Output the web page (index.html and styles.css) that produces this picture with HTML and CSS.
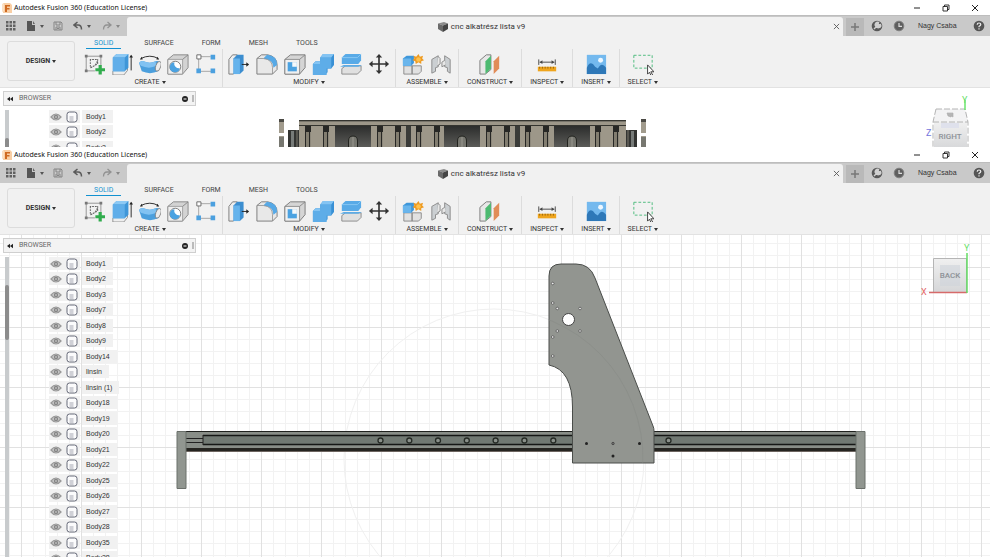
FILE: index.html
```html
<!DOCTYPE html>
<html lang="en">
<head>
<meta charset="utf-8">
<title>Autodesk Fusion 360 (Education License)</title>
<link rel="stylesheet" href="styles.css">
</head>
<body>
<svg class="defs" aria-hidden="true">
  <linearGradient id="dark" x1="0" y1="0" x2="0" y2="1"><stop offset="0" stop-color="#2c2d2c"/><stop offset="1" stop-color="#5b5b58"/></linearGradient>
  <linearGradient id="face" x1="0" y1="0" x2="0" y2="1"><stop offset="0" stop-color="#f0f0f0"/><stop offset="1" stop-color="#d5d6d8"/></linearGradient>
  <symbol id="logo" viewBox="0 0 10 10"><path d="M1 0h7l2 2v8H1z" fill="#f9cfa5"/><path d="M0 1l2-1v8l-2 1z" fill="#fbe0c4"/><path d="M3 2h5v1.500H5V5h2.500v1.400H5V9H3z" fill="#cf6a22"/></symbol>
  <symbol id="apps" viewBox="0 0 10 10"><path d="M0 0h2.500v2.500H0zM3.500 0H6v2.500H3.500zM7 0h2.500v2.500H7zM0 3.500h2.500V6H0zM3.500 3.500H6V6H3.500zM7 3.500h2.500V6H7zM0 7h2.500v2.500H0zM3.500 7H6v2.500H3.500zM7 7h2.500v2.500H7z" fill="#606060"/></symbol>
  <symbol id="file" viewBox="0 0 10 10"><path d="M1 0h5v4h3v6H1z" fill="#555"/><path d="M7 0l2 3H7z" fill="#666"/></symbol>
  <symbol id="save" viewBox="0 0 10 10"><path d="M1 1h7l1 1v7H1zM3 1v3h4V1M3 9V6h4v3M4 7.500h2" fill="none" stroke="#858585"/></symbol>
  <symbol id="undo" viewBox="0 0 10 10"><path d="M4.500 1L1 4l3.500 3M1.500 4H5q3.500 0 3.500 4.500" fill="none" stroke="#5a5a5a" stroke-width="1.500"/></symbol>
  <symbol id="redo" viewBox="0 0 10 10"><path d="M5.500 1L9 4 5.500 7M8.500 4H5q-3.500 0-3.500 4.500" fill="none" stroke="#929292" stroke-width="1.300"/></symbol>
  <symbol id="cube" viewBox="0 0 12 12"><path d="M1 2.500L7 1l4 1.500-5 2z" fill="#8b8b8b"/><path d="M1 2.500l5 2V11L1 8z" fill="#6a6a6a"/><path d="M6 4.500l5-2V8l-5 3z" fill="#444"/></symbol>
  <symbol id="tool" viewBox="0 0 12 12"><circle cx="6" cy="6" r="5.300" fill="#595959"/><path d="M3 9l3-3M5.500 6.500a2 2 0 0 1 2-4L7 4l1 1 1.500-.5a2 2 0 0 1-4 2" stroke="#d0d0d0" stroke-width="1.400" fill="#d0d0d0"/></symbol>
  <symbol id="clock" viewBox="0 0 12 12"><circle cx="6" cy="6" r="4.800" fill="#5f5f5f" stroke="#808080"/><path d="M6 3v3.300h3" stroke="#ddd" stroke-width="1.200" fill="none"/></symbol>
  <symbol id="help" viewBox="0 0 12 12"><circle cx="6" cy="6" r="5.300" fill="#555"/><path d="M4.200 4.800Q4.200 3 6 3t1.800 1.600Q7.800 5.500 6 6.500V7.300M6 8.300v1.300" stroke="#eee" stroke-width="1.200" fill="none"/></symbol>
  <symbol id="win" viewBox="0 0 8 8"><path d="M1 2.500h4.500V7H1zM2.500 2.500V1H7v4.500H5.500" fill="none" stroke="#222" stroke-width=".9"/></symbol>
  <symbol id="sketch" viewBox="0 0 24 24"><path d="M4 3.500h15M4 19.500h9M3.500 4v15M19.500 4v9" stroke="#777" fill="none" stroke-width=".8"/><path d="M2 2h3v3H2zM18 2h3v3h-3zM2 18h3v3H2z" fill="#777"/><path d="M8 7v9l8-4V7zM8 16Q15 14 16 7" fill="none" stroke="#666" stroke-width="1.100" stroke-dasharray="2 1"/><path d="M17 13h3.500v3.500H24V20h-3.500v3.500H17V20h-3.500v-3.500H17z" fill="#31ac4d"/></symbol>
  <symbol id="extrude" viewBox="0 0 24 24"><path d="M2 20l4-5h12v4l-4 5H2z" fill="#eee" stroke="#777" stroke-width=".8"/><path d="M2 5l4-4h13v15l-4 4H2z" fill="#3f96d8"/><path d="M2 5l4-4h13l-4 4z" fill="#8dc9f4"/><path d="M2 5h13v15H2z" fill="#60aee9"/><path d="M22 3v16" stroke="#222"/><path d="M20 5l2-3 2 3z" fill="#222"/></symbol>
  <symbol id="revolve" viewBox="0 0 24 24"><path d="M2 6q10-5 19 0" fill="none" stroke="#222"/><path d="M1 7l2-3 1 3zM22 7l-2-3-1 3z" fill="#222"/><path d="M0 11q2-3 5-2 7 3 13 0 4-1 6 2l-3 9q-9 4-18 0z" fill="#4b9fdd"/><path d="M0 11q2-3 5-2 7 3 13 0l1 5q-8 4-17 0z" fill="#81c2f2"/><ellipse cx="21" cy="14.500" rx="2.700" ry="5.500" transform="rotate(18 21 14.500)" fill="#ececec" stroke="#777" stroke-width=".8"/></symbol>
  <symbol id="hole" viewBox="0 0 24 24"><path d="M1 7l6-5h16v14l-6 7H1z" fill="#d3d3d3" stroke="#858585"/><path d="M1 7h16v16H1z" fill="#eee" stroke="#858585" stroke-width=".7"/><path d="M17 7l6-5" stroke="#858585"/><circle cx="9" cy="15" r="6" fill="#fff" stroke="#777"/><path d="M8 10a5.300 5.300 0 0 0 6 6.500A5.500 5.500 0 1 1 8 10z" fill="#4ba2e1"/></symbol>
  <symbol id="pattern" viewBox="0 0 24 24"><path d="M4 4v16h16M4 4h13" fill="none" stroke="#999" stroke-width=".9"/><path d="M2 2h4.500v4.500H2z" fill="#fff" stroke="#666"/><path d="M17 2h5v5h-5zM1.500 17h5v5h-5zM17 17h5v5h-5z" fill="#4ba0df"/></symbol>
  <symbol id="press" viewBox="0 0 24 24"><path d="M1 7l4-5h5v17l-4 4H1z" fill="#eee" stroke="#777"/><path d="M6 6l4-4h7v17l-4 4H6z" fill="#3c8ed0"/><path d="M6 6h7v17H6z" fill="#65b3ec"/><path d="M15 12.500h6" stroke="#222"/><path d="M20 10l3 2.500-3 2.500z" fill="#222"/></symbol>
  <symbol id="fillet" viewBox="0 0 24 24"><path d="M1 6l5-4h7q10 2 10 11v5l-5 5H1z" fill="#e8e8e8" stroke="#777"/><path d="M8 6l4-4q11 1 11 11l-4 3q0-9-11-10z" fill="#57a9e6"/><path d="M1 6h7q10 1 10 10v7" fill="none" stroke="#888" stroke-width=".8"/></symbol>
  <symbol id="shell" viewBox="0 0 24 24"><path d="M1 7l6-5h16v14l-6 7H1z" fill="#d5d5d5" stroke="#777"/><path d="M1 7h16v16H1z" fill="#f0f0f0" stroke="#777" stroke-width=".8"/><path d="M4 10h10v10H4z" fill="#4ba2e1"/><path d="M9 10h5v5H9z" fill="#f5f8fa"/><path d="M17 7l6-5" stroke="#888"/></symbol>
  <symbol id="combine" viewBox="0 0 24 24"><path d="M9 5l3-4h12v12l-3 4h-4v4l-3 3H1V12l3-3h5z" fill="#3990d5"/><path d="M9 5h12v12h-5v7H1V12h8z" fill="#5eade8"/><path d="M9 5l3-4h12l-3 4zM1 12l3-3h5v3z" fill="#84c4f3"/></symbol>
  <symbol id="split" viewBox="0 0 24 24"><path d="M2 17l4-3h17v5l-4 4H2z" fill="#e0e0e0" stroke="#888"/><path d="M2 5l4-4h17v7l-3 4H2z" fill="#58aae7"/><path d="M0 15l4-2h20l-4 2z" fill="#5dabe5"/><path d="M2 5h17l4-4" fill="none" stroke="#89c8f4"/></symbol>
  <symbol id="move" viewBox="0 0 24 24"><path d="M12 3v18M3 12h18" stroke="#333" stroke-width="1.800"/><path d="M8.500 5L12 1l3.500 4zM8.500 19l3.500 4 3.500-4zM5 8.500L1 12l4 3.500zM19 8.500l4 3.500-4 3.500z" fill="#333"/></symbol>
  <symbol id="component" viewBox="0 0 24 24"><path d="M2 14h9v9H2zM11 14h10v6l-3 3h-7z" fill="#e1e1e1" stroke="#888"/><path d="M1 6l4-3h8v8l-3 3H1z" fill="#3f97da"/><path d="M1 6h9v8H1z" fill="#69b5ec"/><path d="M18 1l1.500 3L23 3l-1 3 2 2-3 1v3l-3-2-3 2-.5-3-3-1 2-2-1-3 3 1z" fill="#ee9b22"/><circle cx="18" cy="7" r="2.500" fill="#ffc24d"/></symbol>
  <symbol id="joint" viewBox="0 0 24 24"><path d="M2 7l7-4v12l-3 1v4l-4 2zM22 7l-6-4v12l3 1v4l3 2z" fill="#cbcfd2" stroke="#888"/><path d="M9 4l2 2v6l-3 2M16 8l-3 2v5l4-2" fill="#e7e7e7" stroke="#888"/></symbol>
  <symbol id="plane" viewBox="0 0 24 24"><path d="M1 8l7-6h5v16l-6 5H1z" fill="#e7e7e7" stroke="#777"/><path d="M7 9l6-6v14l-6 6z" fill="#4cba70"/><path d="M16 9l6-6v14l-6 6z" fill="#e18c58"/></symbol>
  <symbol id="measure" viewBox="0 0 24 24"><path d="M3 7v6M21 7v6M4 10h16" stroke="#444" fill="none"/><path d="M4 10l3-2v4zM20 10l-3-2v4z" fill="#444"/><path d="M2 15h20v5H2z" fill="#efa51d"/><path d="M4 15v2M7 15v2M10 15v2M13 15v2M16 15v2M19 15v2" stroke="#94610b"/></symbol>
  <symbol id="image" viewBox="0 0 24 24"><path d="M2 2h21v21H2z" fill="#74b9ee"/><path d="M2 16q4-9 9-1l3 2q4-8 9-1v7H2z" fill="#2e78b8"/><circle cx="17" cy="8" r="2.700" fill="#edf7ff"/></symbol>
  <symbol id="select" viewBox="0 0 24 24"><path d="M2 2.500h20v14H2z" fill="none" stroke="#46b978" stroke-dasharray="3 2"/><path d="M17 13v10l2-2 2 4 1.500-1-2-3.500H24z" fill="#fff" stroke="#333"/></symbol>
  <symbol id="eye" viewBox="0 0 12 10"><path d="M1 5q5-6 10 0-5 6-10 0z" fill="#c8c8c8" stroke="#999" stroke-width="1.200"/><circle cx="6" cy="5" r="2.200" fill="#858585"/><circle cx="6" cy="5" r=".8" fill="#ddd"/></symbol>
  <symbol id="body" viewBox="0 0 12 12"><rect x="1" y="1" width="10" height="10" rx="2.500" fill="#fbfbfc" stroke="#666a78"/><path d="M3.500 5h4v5h-4z" fill="#d0d1d7"/></symbol>
  <symbol id="slot" viewBox="0 0 6 21"><path d="M0 0h6v6H0zM0 6h1v15H0zM4 6h1v15H4z" fill="#272725"/><path d="M1 6h3v15H1z" fill="#827d70"/><path d="M5 6h1v15H5z" fill="#8d887b"/></symbol>
  <symbol id="pocket" viewBox="0 0 36 21"><path d="M0 0h36v21H0z" fill="url(#dark)"/><path d="M13.500 21v-6q0-5 4.500-5t4.500 5v6" fill="#777770" stroke="#22231f"/><path d="M18 11v10" stroke="#9a988f"/></symbol>
</svg>

<section class="window upper">
  <header class="titlebar"><svg class="i10"><use href="#logo"/></svg><h1>Autodesk Fusion 360 (Education License)</h1>
    <button class="sys" aria-label="Minimize"><svg viewBox="0 0 8 8"><path d="M1 4h6" stroke="#222"/></svg></button><button class="sys" aria-label="Restore"><svg><use href="#win"/></svg></button><button class="sys" aria-label="Close"><svg viewBox="0 0 8 8"><path d="M1 1l6 6M7 1L1 7" stroke="#222"/></svg></button></header>
  <div class="tabbar">
    <div class="quick"><button aria-label="Data panel"><svg class="i10"><use href="#apps"/></svg></button><button class="drop" aria-label="File"><svg class="i10"><use href="#file"/></svg></button><button aria-label="Save"><svg class="i10"><use href="#save"/></svg></button><button class="drop" aria-label="Undo"><svg class="i10"><use href="#undo"/></svg></button><button class="drop pale" aria-label="Redo"><svg class="i10"><use href="#redo"/></svg></button></div>
    <div class="doc"><svg class="i12"><use href="#cube"/></svg><span>cnc alkatrész lista v9</span><button class="close" aria-label="Close tab"><svg viewBox="0 0 8 8"><path d="M1 1l6 6M7 1L1 7" stroke="#555"/></svg></button></div>
    <div class="account"><button class="add" aria-label="New tab"><svg class="i10" viewBox="0 0 10 10"><path d="M5 1v8M1 5h8" stroke="#777" stroke-width="1.500"/></svg></button><button aria-label="Extensions"><svg class="i12"><use href="#tool"/></svg></button><button aria-label="Job status"><svg class="i12"><use href="#clock"/></svg></button><button class="user">Nagy Csaba</button><button aria-label="Help"><svg class="i12"><use href="#help"/></svg></button></div>
  </div>
  <div class="ribbon">
    <button class="design drop">DESIGN</button>
    <div class="tools">
      <nav><a href="#" class="on">SOLID</a><a href="#">SURFACE</a><a href="#">FORM</a><a href="#">MESH</a><a href="#">TOOLS</a></nav>
      <div class="groups">
        <div class="group"><div class="icons"><svg><use href="#sketch"/></svg><svg><use href="#extrude"/></svg><svg><use href="#revolve"/></svg><svg><use href="#hole"/></svg><svg><use href="#pattern"/></svg></div><button class="drop">CREATE</button></div>
        <div class="group"><div class="icons"><svg><use href="#press"/></svg><svg><use href="#fillet"/></svg><svg><use href="#shell"/></svg><svg><use href="#combine"/></svg><svg><use href="#split"/></svg><svg><use href="#move"/></svg></div><button class="drop">MODIFY</button></div>
        <div class="group pair"><div class="icons"><svg><use href="#component"/></svg><svg><use href="#joint"/></svg></div><button class="drop">ASSEMBLE</button></div>
        <div class="group single"><div class="icons"><svg><use href="#plane"/></svg></div><button class="drop">CONSTRUCT</button></div>
        <div class="group single"><div class="icons"><svg><use href="#measure"/></svg></div><button class="drop">INSPECT</button></div>
        <div class="group single"><div class="icons"><svg><use href="#image"/></svg></div><button class="drop">INSERT</button></div>
        <div class="group single"><div class="icons"><svg><use href="#select"/></svg></div><button class="drop">SELECT</button></div>
      </div>
    </div>
  </div>
  <main class="canvas">
    <svg class="scene" viewBox="0 0 990 59" preserveAspectRatio="xMidYMin slice" role="img" aria-label="Gantry, side view">
      <path d="M279 31h5v28h-5zM641 31h5v28h-5z" fill="#a19b8d"/><path d="M279 31h5v3h-5zM641 31h5v3h-5z" fill="#4b4a45"/><path d="M279 49h5v10h-5zM641 49h5v10h-5z" fill="#777770"/><path d="M278 45h7v3h-7zM640 45h7v3h-7z" fill="#fff"/>
      <path d="M288 42h11v17h-11zM626 42h11v17h-11z" fill="#333432"/><path d="M291 43h3v16h-3zM631 43h3v16h-3z" fill="#777b79"/><path d="M297 42v17M628 42v17" stroke="#7c786e"/>
      <path d="M299 32h327v27H299z" fill="#9d9789"/><path d="M299 32.500h327M299 37.500h327" stroke="#34342f"/><path d="M299 33h327v1H299z" fill="#77746a"/>
      <g><use href="#slot" x="305" y="38" width="6" height="21"/><use href="#slot" x="323" y="38" width="6" height="21"/><use href="#slot" x="377" y="38" width="6" height="21"/><use href="#slot" x="395" y="38" width="6" height="21"/><use href="#slot" x="416" y="38" width="6" height="21"/><use href="#slot" x="434" y="38" width="6" height="21"/><use href="#slot" x="486" y="38" width="6" height="21"/><use href="#slot" x="504" y="38" width="6" height="21"/><use href="#slot" x="525" y="38" width="6" height="21"/><use href="#slot" x="543" y="38" width="6" height="21"/><use href="#slot" x="595" y="38" width="6" height="21"/><use href="#slot" x="613" y="38" width="6" height="21"/></g>
      <use href="#pocket" x="335" y="38" width="36" height="21"/><use href="#pocket" x="444" y="38" width="36" height="21"/><use href="#pocket" x="554" y="38" width="36" height="21"/>
      <path d="M406 38h5v21h-5zM515 38h5v21h-5z" fill="#3a3b38"/>
    </svg>
    <svg class="viewcube" viewBox="0 0 70 62" role="img" aria-label="View cube: right">
      <path d="M16 21h29l3 13H13z" fill="#f3f3f4"/><path d="M14 34h33v28H14z" fill="url(#face)"/><path d="M21 35h18v5H21z" fill="#dfe1ec"/><path d="M16 21h29l3 13v28M16 21l-3 13v28M13 34h35" fill="none" stroke="#b4b4b4" stroke-dasharray="6 2"/>
      <path d="M27 25h6v4l-2-1v1l-3-1zM28 27h5" fill="#bbb" stroke="#aaa" stroke-width=".6"/>
      <path d="M45 12v10" stroke="#6be46b" stroke-width="1.500"/><text x="42" y="15" class="axis y">Y</text><text x="6" y="48" class="axis z">Z</text><text x="30" y="51" class="label">RIGHT</text>
    </svg>
    <aside class="browser"><div class="panel"><button aria-label="Collapse"><svg viewBox="0 0 8 6"><path d="M4 0v6L0 3zM8 0v6L4 3z" fill="#222"/></svg></button><h2>BROWSER</h2><button aria-label="Options"><svg viewBox="0 0 6 6"><circle cx="3" cy="3" r="3" fill="#222"/><path d="M1.500 3h3" stroke="#fff"/></svg></button><i></i></div>
      <div class="tree"><div class="scroll"><b></b></div><ul>
        <li><span><svg><use href="#eye"/></svg><svg><use href="#body"/></svg></span><em>Body1</em></li>
        <li><span><svg><use href="#eye"/></svg><svg><use href="#body"/></svg></span><em>Body2</em></li>
        <li><span><svg><use href="#eye"/></svg><svg><use href="#body"/></svg></span><em>Body3</em></li>
      </ul></div></aside>
  </main>
</section>

<section class="window lower">
  <header class="titlebar"><svg class="i10"><use href="#logo"/></svg><h1>Autodesk Fusion 360 (Education License)</h1>
    <button class="sys" aria-label="Minimize"><svg viewBox="0 0 8 8"><path d="M1 4h6" stroke="#222"/></svg></button><button class="sys" aria-label="Restore"><svg><use href="#win"/></svg></button><button class="sys" aria-label="Close"><svg viewBox="0 0 8 8"><path d="M1 1l6 6M7 1L1 7" stroke="#222"/></svg></button></header>
  <div class="tabbar">
    <div class="quick"><button aria-label="Data panel"><svg class="i10"><use href="#apps"/></svg></button><button class="drop" aria-label="File"><svg class="i10"><use href="#file"/></svg></button><button aria-label="Save"><svg class="i10"><use href="#save"/></svg></button><button class="drop" aria-label="Undo"><svg class="i10"><use href="#undo"/></svg></button><button class="drop pale" aria-label="Redo"><svg class="i10"><use href="#redo"/></svg></button></div>
    <div class="doc"><svg class="i12"><use href="#cube"/></svg><span>cnc alkatrész lista v9</span><button class="close" aria-label="Close tab"><svg viewBox="0 0 8 8"><path d="M1 1l6 6M7 1L1 7" stroke="#555"/></svg></button></div>
    <div class="account"><button class="add" aria-label="New tab"><svg class="i10" viewBox="0 0 10 10"><path d="M5 1v8M1 5h8" stroke="#777" stroke-width="1.500"/></svg></button><button aria-label="Extensions"><svg class="i12"><use href="#tool"/></svg></button><button aria-label="Job status"><svg class="i12"><use href="#clock"/></svg></button><button class="user">Nagy Csaba</button><button aria-label="Help"><svg class="i12"><use href="#help"/></svg></button></div>
  </div>
  <div class="ribbon">
    <button class="design drop">DESIGN</button>
    <div class="tools">
      <nav><a href="#" class="on">SOLID</a><a href="#">SURFACE</a><a href="#">FORM</a><a href="#">MESH</a><a href="#">TOOLS</a></nav>
      <div class="groups">
        <div class="group"><div class="icons"><svg><use href="#sketch"/></svg><svg><use href="#extrude"/></svg><svg><use href="#revolve"/></svg><svg><use href="#hole"/></svg><svg><use href="#pattern"/></svg></div><button class="drop">CREATE</button></div>
        <div class="group"><div class="icons"><svg><use href="#press"/></svg><svg><use href="#fillet"/></svg><svg><use href="#shell"/></svg><svg><use href="#combine"/></svg><svg><use href="#split"/></svg><svg><use href="#move"/></svg></div><button class="drop">MODIFY</button></div>
        <div class="group pair"><div class="icons"><svg><use href="#component"/></svg><svg><use href="#joint"/></svg></div><button class="drop">ASSEMBLE</button></div>
        <div class="group single"><div class="icons"><svg><use href="#plane"/></svg></div><button class="drop">CONSTRUCT</button></div>
        <div class="group single"><div class="icons"><svg><use href="#measure"/></svg></div><button class="drop">INSPECT</button></div>
        <div class="group single"><div class="icons"><svg><use href="#image"/></svg></div><button class="drop">INSERT</button></div>
        <div class="group single"><div class="icons"><svg><use href="#select"/></svg></div><button class="drop">SELECT</button></div>
      </div>
    </div>
  </div>
  <main class="canvas">
    <svg class="scene" viewBox="0 0 990 322" preserveAspectRatio="xMidYMin slice" role="img" aria-label="Gantry, back view">
      <defs><pattern id="grid" x="21" y="32" width="60" height="60" patternUnits="userSpaceOnUse"><path d="M12.500 0v60M24.500 0v60M36.500 0v60M48.500 0v60M0 12.500h60M0 24.500h60M0 36.500h60M0 48.500h60" stroke="#f2f2f2"/><path d="M.5 0v60M0 .5h60" stroke="#e1e1e1"/></pattern></defs>
      <rect width="990" height="322" fill="url(#grid)"/>
      <circle cx="494" cy="224" r="150" fill="none" stroke="#f0f0f0"/>
      <path d="M186 196h670v21H186z" fill="#898e88"/><path d="M186 196.500h670" stroke="#20221f"/><path d="M186 213h670v3H186z" fill="#252420"/><path d="M186 216h670v1H186z" fill="#6d6560"/>
      <path d="M186 203.500h17M186 207.500h17" stroke="#222"/><path d="M203 200h653v10H203z" fill="#717973"/><path d="M203 200.500h653M203 209.500h653" stroke="#151715" stroke-width="1.500"/><path d="M203 200v10" stroke="#222"/>
      <path d="M177 196.500h9v57h-9zM856 196.500h9v57h-9z" fill="#919690" stroke="#6b706b"/>
      <g fill="#8a908a" stroke="#252a25" stroke-width="1.300"><circle cx="380.500" cy="205.500" r="2.500"/><circle cx="409.300" cy="205.500" r="2.500"/><circle cx="438" cy="205.500" r="2.500"/><circle cx="466.800" cy="205.500" r="2.500"/><circle cx="495.600" cy="205.500" r="2.500"/><circle cx="524.400" cy="205.500" r="2.500"/><circle cx="553.300" cy="205.500" r="2.500"/><circle cx="668.500" cy="205.500" r="2.500"/></g>
      <path d="M549 130V41q0-12 12-12h15q14 0 19 14l58 148q1 2 1 5v32h-81.500v-56q0-37-23.500-42z" fill="#929590" stroke="#4a4d4a"/>
      <path d="M494 74a150 150 0 0 1 149 154" fill="none" stroke="#888b86" stroke-width=".6" clip-path="inset(0 0 0 55px)"/>
      <circle cx="568.500" cy="84.500" r="6" fill="#fff" stroke="#444"/>
      <g fill="#eee" stroke="#555" stroke-width=".8"><circle cx="552.700" cy="48.500" r="1.300"/><circle cx="552.700" cy="68" r="1.300"/><circle cx="557.300" cy="73.500" r="1.300"/><circle cx="580" cy="73.500" r="1.300"/><circle cx="557.300" cy="96" r="1.300"/><circle cx="580" cy="96" r="1.300"/><circle cx="552.700" cy="102" r="1.300"/><circle cx="552.700" cy="121" r="1.300"/></g>
      <g fill="#222"><circle cx="586.500" cy="208.500" r="1.500"/><circle cx="639.500" cy="208.500" r="1.500"/><circle cx="613" cy="221" r="1.500"/></g><circle cx="613" cy="208.500" r="1.200" fill="#777" stroke="#333" stroke-width=".7"/>
    </svg>
    <svg class="viewcube" viewBox="0 0 70 62" role="img" aria-label="View cube: back">
      <path d="M13.500 23.500h33v34h-33z" fill="url(#face)" stroke="#b5b5b5"/><path d="M20 30h20v21H20z" fill="#cfd3da" opacity=".6"/>
      <path d="M9 57.500h38" stroke="#d66a6a" stroke-width="1.500"/><path d="M47 18v40" stroke="#63dc63" stroke-width="1.500"/><text x="44" y="16" class="axis y">Y</text><text x="1" y="60" class="axis x">X</text><text x="30" y="43" class="label">BACK</text>
    </svg>
    <aside class="browser"><div class="panel"><button aria-label="Collapse"><svg viewBox="0 0 8 6"><path d="M4 0v6L0 3zM8 0v6L4 3z" fill="#222"/></svg></button><h2>BROWSER</h2><button aria-label="Options"><svg viewBox="0 0 6 6"><circle cx="3" cy="3" r="3" fill="#222"/><path d="M1.500 3h3" stroke="#fff"/></svg></button><i></i></div>
      <div class="tree"><div class="scroll"><b></b></div><ul>
        <li><span><svg><use href="#eye"/></svg><svg><use href="#body"/></svg></span><em>Body1</em></li>
        <li><span><svg><use href="#eye"/></svg><svg><use href="#body"/></svg></span><em>Body2</em></li>
        <li><span><svg><use href="#eye"/></svg><svg><use href="#body"/></svg></span><em>Body3</em></li>
        <li><span><svg><use href="#eye"/></svg><svg><use href="#body"/></svg></span><em>Body7</em></li>
        <li><span><svg><use href="#eye"/></svg><svg><use href="#body"/></svg></span><em>Body8</em></li>
        <li><span><svg><use href="#eye"/></svg><svg><use href="#body"/></svg></span><em>Body9</em></li>
        <li><span><svg><use href="#eye"/></svg><svg><use href="#body"/></svg></span><em>Body14</em></li>
        <li><span><svg><use href="#eye"/></svg><svg><use href="#body"/></svg></span><em>linsin</em></li>
        <li><span><svg><use href="#eye"/></svg><svg><use href="#body"/></svg></span><em>linsin (1)</em></li>
        <li><span><svg><use href="#eye"/></svg><svg><use href="#body"/></svg></span><em>Body18</em></li>
        <li><span><svg><use href="#eye"/></svg><svg><use href="#body"/></svg></span><em>Body19</em></li>
        <li><span><svg><use href="#eye"/></svg><svg><use href="#body"/></svg></span><em>Body20</em></li>
        <li><span><svg><use href="#eye"/></svg><svg><use href="#body"/></svg></span><em>Body21</em></li>
        <li><span><svg><use href="#eye"/></svg><svg><use href="#body"/></svg></span><em>Body22</em></li>
        <li><span><svg><use href="#eye"/></svg><svg><use href="#body"/></svg></span><em>Body25</em></li>
        <li><span><svg><use href="#eye"/></svg><svg><use href="#body"/></svg></span><em>Body26</em></li>
        <li><span><svg><use href="#eye"/></svg><svg><use href="#body"/></svg></span><em>Body27</em></li>
        <li><span><svg><use href="#eye"/></svg><svg><use href="#body"/></svg></span><em>Body28</em></li>
        <li><span><svg><use href="#eye"/></svg><svg><use href="#body"/></svg></span><em>Body35</em></li>
        <li><span><svg><use href="#eye"/></svg><svg><use href="#body"/></svg></span><em>Body38</em></li>
      </ul></div></aside>
  </main>
</section>
</body>
</html>
```
FILE: styles.css
```css
* { box-sizing: border-box; }
body { margin: 0; height: 100vh; display: flex; flex-direction: column; overflow: hidden; background: #fff; color: #333; font: 7px/10px "Liberation Sans", Arial, sans-serif; }
button { border: 0; padding: 0; margin: 0; background: none; color: inherit; font: inherit; display: flex; align-items: center; justify-content: center; }
h1, h2 { margin: 0; font-weight: 400; }
svg { display: block; flex: none; }
.defs { position: absolute; width: 0; height: 0; }
.i10 { width: 10px; height: 10px; }
.i12 { width: 12px; height: 12px; }
.drop::after { content: ""; border: 2px solid transparent; border-top: 3px solid currentColor; border-bottom: 0; margin-left: 2px; }

.window { display: flex; flex-direction: column; min-height: 0; overflow: hidden; }
.upper { flex: none; }
.lower { flex: 1; }
.titlebar { height: 15px; flex: none; display: flex; align-items: center; padding: 0 2px; gap: 2px; }
.titlebar h1 { flex: 1; color: #111; font: 7px/14px "Noto Sans", sans-serif; }
.sys { width: 27px; height: 15px; }
.sys svg { width: 8px; height: 8px; }

.tabbar { height: 21px; flex: none; display: flex; align-items: stretch; background: #c9c9c9; border-top: 1px solid #bdbdbd; color: #444; }
.quick { width: 127px; display: flex; align-items: center; gap: 8px; padding-left: 6px; color: #555; }
.quick .pale { color: #888; }
.quick .drop { width: 21px; }
.quick .drop::after { margin-left: 4px; }
.doc { flex: 1; display: flex; align-items: center; justify-content: center; gap: 2px; margin-top: 1px; background: #f1f1f1; border-radius: 3px 3px 0 0; font: 8px/12px Roboto, sans-serif; color: #333; padding-left: 8px; }
.doc svg.i12 { margin-left: auto; }
.doc .close { margin-left: auto; width: 14px; height: 14px; }
.close svg { width: 7px; height: 7px; }
.account { width: 147px; display: flex; align-items: center; padding: 0 5px 0 3px; }
.account .add { width: 18px; height: 18px; margin: 1px 7px 0 0; background: #b9b9b9; }
.account .i12 { margin-right: 10px; }
.account .add .i10 { margin: 0; }
.account .user { margin: 0 auto 0 3px; color: #333; }
.account button:last-child .i12 { margin-right: 0; }

.ribbon { height: 52px; flex: none; display: flex; background: #f1f1f1; border-bottom: 1px solid #e2e2e2; font: 7px/9px Roboto, sans-serif; }
.design { width: 68px; height: 40px; margin: 5px 3px 0 7px; border: 1px solid #dcdcdc; border-radius: 3px; font-weight: 700; }
.tools { flex: 1; }
nav { display: flex; gap: 18px; padding-left: 8px; height: 13px; }
nav a { color: #444; text-decoration: none; padding: 3px 5px 0; height: 13px; }
nav .on { color: #1291d0; border-bottom: 1px solid #1291d0; padding: 3px 8px 0; }
.groups { display: flex; }
.group { display: flex; flex-direction: column; align-items: center; padding: 0 2px; border-right: 1px solid #dcdcdc; height: 38px; }
.group:last-child { border: 0; }
.group.pair { padding: 0 3px; }
.group.single { padding: 0 8px; }
.icons { display: flex; height: 29px; align-items: center; }
.icons svg { width: 22px; height: 22px; margin: 0 3px; }

.canvas { position: relative; flex: 1; overflow: hidden; background: #fff; }
.upper .canvas { flex: none; height: 59px; }
.scene { position: absolute; inset: 0; width: 100%; height: 100%; }
.viewcube { position: absolute; top: 0; right: 0; width: 70px; height: 62px; }
.axis { font: 9px Roboto, sans-serif; }
.x { fill: #e56464; }
.y { fill: #69df69; }
.z { fill: #7474dd; }
.label { font: 500 8px Roboto, sans-serif; fill: #8e9297; text-anchor: middle; }

.browser { position: relative; display: flex; flex-direction: column; height: 100%; width: 196px; padding: 3px 0 0 3px; }
.panel { height: 15px; flex: none; display: flex; align-items: center; padding: 0 1px 0 3px; background: #f3f3f3; border: 1px solid #cfcfcf; }
.panel h2 { flex: 1; margin-left: 6px; color: #666; font: 7px/13px Roboto, sans-serif; }
.panel svg { width: 6px; height: 6px; }
.panel i { width: 2px; height: 7px; margin-left: 4px; background: #bbb; }
.tree { flex: 1; min-height: 0; margin-top: 4px; display: flex; }
.scroll { width: 4px; margin-left: 2px; background: #c8cbcd; }
.scroll b { display: block; height: 55px; margin-top: 28px; border-radius: 2px; background: #8c8c8c; }
ul { list-style: none; margin: 0; padding: 0 0 0 40px; display: flex; flex-direction: column; gap: 2px; }
li { display: flex; align-items: stretch; gap: 2px; height: 13px; flex: none; }
li:nth-child(even) { margin-bottom: 1px; }
li span { display: flex; align-items: center; gap: 4px; width: 31px; padding-left: 1px; background: #f1f1f1; }
li svg { width: 12px; height: 12px; }
li em { padding: 0 7px 0 4px; background: #f1f1f1; font-style: normal; line-height: 13px; color: #333; }
```
